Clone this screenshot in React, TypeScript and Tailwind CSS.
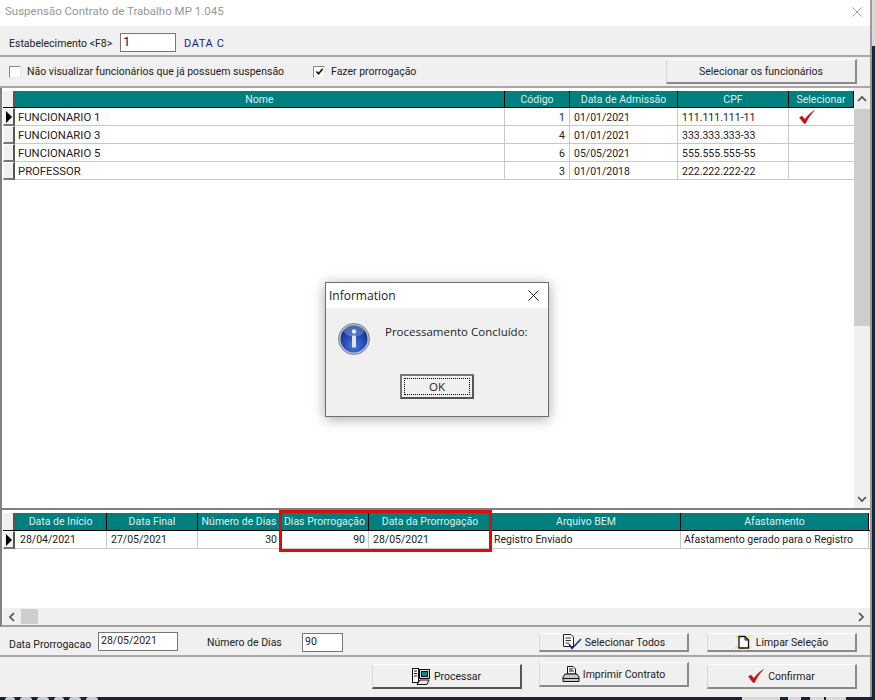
const font = "font-['Roboto',Arial,sans-serif]";

const topColumns = [
  { title: 'Nome', width: 'w-[490px]' },
  { title: 'Código', width: 'w-[65px]' },
  { title: 'Data de Admissão', width: 'w-[108px]' },
  { title: 'CPF', width: 'w-[111px]' },
  { title: 'Selecionar', width: 'w-[65px]' },
];

const employees = [
  { name: 'FUNCIONARIO 1', code: '1', date: '01/01/2021', cpf: '111.111.111-11', selected: true },
  { name: 'FUNCIONARIO 3', code: '4', date: '01/01/2021', cpf: '333.333.333-33', selected: false },
  { name: 'FUNCIONARIO 5', code: '6', date: '05/05/2021', cpf: '555.555.555-55', selected: false },
  { name: 'PROFESSOR', code: '3', date: '01/01/2018', cpf: '222.222.222-22', selected: false },
];

const bottomColumns = [
  { title: 'Data de Início', width: 'w-[92px]', value: '28/04/2021', pad: 'pl-[5px]' },
  { title: 'Data Final', width: 'w-[91px]', value: '27/05/2021', pad: 'pl-[4px]' },
  { title: 'Número de Dias', width: 'w-[83px]', value: '30', pad: 'pr-[3px] text-right' },
  { title: 'Dias Prorrogação', width: 'w-[88px]', value: '90', pad: 'pr-[3px] text-right' },
  { title: 'Data da Prorrogação', width: 'w-[123px]', value: '28/05/2021', pad: 'pl-[4px]' },
  { title: 'Arquivo BEM', width: 'w-[189px]', value: 'Registro Enviado', pad: 'pl-[2px]' },
  { title: 'Afastamento', width: 'w-[188px]', value: 'Afastamento gerado para o Registro', pad: 'pl-[3px]' },
];

function RedCheck({ className }: { className: string }) {
  return (
    <svg viewBox="0 0 16 14" className={className}>
      <path d="M0.5 7.5 L3 6 L6 9.5 C8 6 11 3 15.5 0.5 C12 4 9 8 6.5 13.5 L5 13.5 Z" fill="#d40f14" stroke="#7d0a0c" strokeWidth="0.4" />
    </svg>
  );
}

function Arrow() {
  return (
    <svg viewBox="0 0 8 12" className="h-[12px] w-[8px]">
      <path d="M1 0 L7 6 L1 12 Z" fill="#000" />
    </svg>
  );
}

function Chevron({ d }: { d: string }) {
  return (
    <svg viewBox="0 0 10 10" className="h-[10px] w-[10px]">
      <path d={d} fill="none" stroke="#505050" strokeWidth="1.7" />
    </svg>
  );
}

function Indicator({ current }: { current?: boolean }) {
  return (
    <div className="flex h-[18px] w-[12px] shrink-0 items-center justify-center border-t border-l border-t-white border-l-white border-r-2 border-b-2 border-r-[#555] border-b-[#777] bg-[#f0f0f0]">
      {current && <Arrow />}
    </div>
  );
}

function Check({ checked }: { checked?: boolean }) {
  return (
    <span className="flex h-[12px] w-[12px] shrink-0 items-center justify-center border border-[#8a8a8a] border-r-[#e8e8e8] border-b-[#e8e8e8] bg-white">
      {checked && (
        <svg viewBox="0 0 10 10" className="h-[9px] w-[9px]">
          <path d="M1.5 5 L4 7.5 L8.5 2" fill="none" stroke="#111" strokeWidth="1.8" />
        </svg>
      )}
    </span>
  );
}

function Field({ value, className }: { value: string; className: string }) {
  return (
    <div className={`shrink-0 border border-[#777] bg-white pl-[2px] leading-[15px] ${className}`}>{value}</div>
  );
}

function Btn({ children, className, heavy }: { children: React.ReactNode; className: string; heavy?: boolean }) {
  return (
    <div
      className={`flex shrink-0 items-center justify-center border-t border-l border-t-white border-l-[#d8d8d8] border-r-2 border-b-2 ${heavy ? 'border-r-[#555] border-b-[#555]' : 'border-r-[#8a8a8a] border-b-[#8a8a8a]'} bg-[#f0f0f0] ${className}`}
    >
      {children}
    </div>
  );
}

function InfoIcon() {
  return (
    <svg viewBox="0 0 32 32" className="h-[32px] w-[32px] shrink-0">
      <defs>
        <radialGradient id="info" cx="50%" cy="75%" r="70%">
          <stop offset="0%" stopColor="#4a7ae0" />
          <stop offset="60%" stopColor="#2247b0" />
          <stop offset="100%" stopColor="#16307f" />
        </radialGradient>
      </defs>
      <circle cx="16" cy="16" r="15.5" fill="#b9c0cc" stroke="#7a8496" strokeWidth="1" />
      <circle cx="16" cy="16" r="13.5" fill="url(#info)" />
      <ellipse cx="16" cy="8" rx="10" ry="5.5" fill="#8ea8e6" opacity="0.45" />
      <circle cx="16" cy="8.5" r="2.2" fill="#e8ecf4" />
      <rect x="14" y="12.5" width="4" height="12" rx="0.6" fill="#dfe4ee" />
    </svg>
  );
}

function SelectAllIcon() {
  return (
    <svg viewBox="0 0 20 16" className="h-[16px] w-[20px]">
      <path d="M1.5 0.5 H9 L11.5 3 V12.5 H1.5 Z" fill="#fff" stroke="#222" />
      <path d="M3.5 4 H9 M3.5 6.5 H9 M3.5 9 H7" stroke="#333" />
      <path d="M7 10 L10 14.5 L19 5" fill="none" stroke="#1c2a90" strokeWidth="1.5" />
    </svg>
  );
}

function ClearIcon() {
  return (
    <svg viewBox="0 0 18 18" className="h-[18px] w-[18px]">
      <path d="M1 3 L4 6 M0 16 L3 13 M16 2 L13 5 M16 15 L14 13 M8 17.5 V15.5" stroke="#f2e23a" strokeWidth="1.5" />
      <path d="M4 3.5 H10 L13.5 7 V15 H4 Z" fill="#fff" stroke="#111" strokeWidth="1.3" />
      <path d="M10 3.5 V7 H13.5" fill="none" stroke="#111" />
    </svg>
  );
}

function PrintIcon() {
  return (
    <svg viewBox="0 0 18 16" className="h-[16px] w-[18px]">
      <path d="M5.5 0.5 H11 L13.5 3 V8 H5.5 Z" fill="#fff" stroke="#111" />
      <path d="M7 3 H11 M7 5 H12" stroke="#111" />
      <path d="M3 8 H15 L17 11 V15.5 H1 V11 Z" fill="#c8c8c8" stroke="#111" />
      <path d="M1 12.5 H17" stroke="#111" />
    </svg>
  );
}

function ProcessIcon() {
  return (
    <svg viewBox="0 0 18 17" className="h-[17px] w-[18px]">
      <rect x="0.5" y="0.5" width="6" height="14" fill="#fff" stroke="#111" />
      <path d="M2 3 H5 M2 5.5 H5 M2 8 H5" stroke="#111" />
      <rect x="7.5" y="1.5" width="10" height="9" fill="#d8d8d8" stroke="#111" />
      <rect x="9.5" y="3.5" width="6" height="5" fill="#0f8a8a" stroke="#111" />
      <path d="M5 16.5 L8 12 H17 L15 16.5 Z" fill="#e8e8e8" stroke="#111" />
    </svg>
  );
}

export default function App() {
  return (
    <div className={`relative h-[700px] w-[875px] overflow-hidden bg-[#1b2233] text-[10.5px] text-[#222] ${font}`}>
      <div className="flex h-[697px]">
        <div className="flex h-[697px] w-[870px] shrink-0 flex-col bg-[#f0f0f0]">
          {/* barra de titulo */}
          <div className="flex h-[26px] shrink-0 items-center justify-between bg-white pb-[2px] pl-[5px] pr-[8px]">
            <span className="text-[11.5px] text-[#979797]">Suspensão Contrato de Trabalho MP 1.045</span>
            <svg viewBox="0 0 12 12" className="h-[10px] w-[10px]">
              <path d="M0.5 0.5 L11.5 11.5 M11.5 0.5 L0.5 11.5" stroke="#8c8c8c" strokeWidth="1" />
            </svg>
          </div>

          <div className="flex h-[31px] shrink-0 items-center border-b-2 border-[#a8a8a8] pl-[9px] pt-[4px]">
            <span className="mt-[3px] w-[104px] whitespace-nowrap">Estabelecimento &lt;F8&gt;</span>
            <Field value="1" className="ml-[7px] h-[19px] w-[56px] text-[13px]" />
            <span className="ml-[8px] mt-[3px] text-[11px] tracking-[0.6px] text-[#1c1c78]">DATA C</span>
          </div>

          <div className="flex h-[31px] shrink-0 items-center border-b-2 border-[#a8a8a8] pl-[9px]">
            <Check />
            <span className="ml-[6px] mt-[1px] w-[286px] whitespace-nowrap">Não visualizar funcionários que já possuem suspensão</span>
            <Check checked />
            <span className="ml-[6px] mt-[1px]">Fazer prorrogação</span>
            <Btn className="ml-auto mr-[13px] h-[25px] w-[191px] pt-[2px]">Selecionar os funcionários</Btn>
          </div>

          {/* grade de funcionarios */}
          <div className="flex h-[422px] shrink-0 border-b-2 border-l-2 border-[#808080] bg-white pl-px">
            <div className="min-w-0 flex-1 pt-[3px]">
              <div className="flex h-[17px] border-b border-black">
                <div className="h-[16px] w-[12px] shrink-0 border-r-2 border-r-[#555] bg-[#f0f0f0]" />
                {topColumns.map((c) => (
                  <div key={c.title} className={`${c.width} flex shrink-0 items-center justify-center border-r border-black bg-[#007f7f] pt-[1px] text-[#dcefef]`}>
                    {c.title}
                  </div>
                ))}
              </div>
              {employees.map((e, i) => (
                <div key={e.name} className="flex h-[18px]">
                  <Indicator current={i === 0} />
                  <div className="flex flex-1 border-b border-[#c8c8c8]">
                    <div className="w-[490px] border-r border-[#c8c8c8] pl-[3px] text-[11.3px] leading-[19px]">{e.name}</div>
                    <div className="w-[65px] border-r border-[#c8c8c8] pr-[4px] text-right leading-[19px]">{e.code}</div>
                    <div className="w-[108px] border-r border-[#c8c8c8] pl-[4px] leading-[19px]">{e.date}</div>
                    <div className="w-[111px] border-r border-[#c8c8c8] pl-[4px] leading-[19px]">{e.cpf}</div>
                    <div className="w-[65px] pl-[10px] pt-[2px]">{e.selected && <RedCheck className="h-[14px] w-[16px]" />}</div>
                  </div>
                </div>
              ))}
            </div>
            <div className="flex w-[16px] shrink-0 flex-col bg-[#f0f0f0]">
              <div className="flex h-[18px] shrink-0 items-center justify-center pt-[3px]">
                <Chevron d="M1 7 L5 3 L9 7" />
              </div>
              <div className="mt-[3px] h-[217px] bg-[#cdcdcd]" />
              <div className="mt-auto flex h-[18px] items-center justify-center">
                <Chevron d="M1 3 L5 7 L9 3" />
              </div>
            </div>
          </div>

          {/* grade de periodos */}
          <div className="flex h-[117px] shrink-0 flex-col border-b-2 border-l-2 border-[#a0a0a0] border-l-[#808080] bg-white pl-px">
            <div className="flex-1 pt-[3px]">
              <div className="flex h-[18px] border-b border-black">
                <div className="h-[17px] w-[12px] shrink-0 border-r-2 border-r-[#555] bg-[#f0f0f0]" />
                {bottomColumns.map((c) => (
                  <div key={c.title} className={`${c.width} flex shrink-0 items-center justify-center overflow-hidden whitespace-nowrap border-r border-black bg-[#007f7f] pt-[1px] text-[#dcefef]`}>
                    {c.title}
                  </div>
                ))}
              </div>
              <div className="flex h-[18px]">
                <Indicator current />
                <div className="flex flex-1 border-b border-[#c8c8c8]">
                  {bottomColumns.map((c) => (
                    <div
                      key={c.title}
                      className={`${c.width} ${c.pad} shrink-0 overflow-hidden whitespace-nowrap border-r border-[#c8c8c8] leading-[18px]`}
                    >
                      {c.value}
                    </div>
                  ))}
                </div>
              </div>
            </div>
            <div className="flex h-[17px] shrink-0 items-center bg-[#f0f0f0]">
              <div className="flex w-[18px] justify-center">
                <Chevron d="M7 1 L3 5 L7 9" />
              </div>
              <div className="h-[15px] w-[17px] bg-[#cdcdcd]" />
              <div className="ml-auto flex w-[18px] justify-center">
                <Chevron d="M3 1 L7 5 L3 9" />
              </div>
            </div>
          </div>

          <div className="flex h-[30px] shrink-0 items-start border-b-2 border-[#a8a8a8] pl-[9px] pt-[5px]">
            <span className="mt-[5px] w-[89px] shrink-0 whitespace-nowrap">Data Prorrogacao</span>
            <Field value="28/05/2021" className="h-[19px] w-[80px]" />
            <span className="ml-[29px] mt-[3px] w-[95px] shrink-0 whitespace-nowrap">Número de Dias</span>
            <Field value="90" className="mt-[1px] h-[19px] w-[41px]" />
            <Btn className="ml-[196px] mt-[1px] h-[19px] w-[150px] gap-[3px]">
              <SelectAllIcon />
              <span className="pt-[2px]">Selecionar Todos</span>
            </Btn>
            <Btn className="ml-[18px] mt-[1px] h-[19px] w-[150px] gap-[3px]">
              <ClearIcon />
              <span className="pt-[2px]">Limpar Seleção</span>
            </Btn>
          </div>

          <div className="flex flex-1 items-start pl-[372px]">
            <Btn heavy className="mt-[7px] h-[25px] w-[150px] gap-[4px]">
              <ProcessIcon />
              <span className="pt-[2px]">Processar</span>
            </Btn>
            <Btn className="ml-[17px] mt-[5px] h-[25px] w-[150px] gap-[3px]">
              <PrintIcon />
              <span className="pt-[2px]">Imprimir Contrato</span>
            </Btn>
            <Btn className="ml-[18px] mt-[7px] h-[25px] w-[150px] gap-[4px]">
              <RedCheck className="h-[14px] w-[16px]" />
              <span className="pt-[2px]">Confirmar</span>
            </Btn>
          </div>
        </div>

        {/* borda direita e fundo da tela */}
        <div className="w-[2px] shrink-0 bg-[#9a9a9a]" />
        <div className="h-[46px] w-[3px] shrink-0 bg-[#d9d9d9]" />
      </div>

      {/* restos do desktop na borda de baixo */}
      <div className="flex h-[3px]">
        <div className="ml-[5px] flex w-[105px] gap-[5px]">
          <div className="h-[3px] w-[10px] rounded-t-full bg-[#c8ccd8]" />
          <div className="h-[3px] w-[12px] rounded-t-full bg-[#c8ccd8]" />
          <div className="h-[3px] w-[12px] rounded-t-full bg-[#c8ccd8]" />
          <div className="h-[3px] w-[10px] rounded-t-full bg-[#c8ccd8]" />
          <div className="h-[3px] w-[12px] rounded-t-full bg-[#c8ccd8]" />
          <div className="h-[3px] w-[12px] rounded-t-full bg-[#c8ccd8]" />
        </div>
        <div className="ml-[632px] h-[3px] w-[38px] bg-[#d8d8d8]" />
        <div className="ml-[8px] h-[3px] w-[13px] bg-[#d8d8d8]" />
        <div className="ml-[9px] h-[3px] w-[14px] bg-[#d8d8d8]" />
        <div className="ml-[2px] h-[3px] w-[20px] bg-[#d8d8d8]" />
      </div>

      {/* marca vermelha */}
      <div className="absolute left-[279px] top-[510px] h-[42px] w-[213px] border-[3px] border-[#e00c0c]" />

      {/* dialogo */}
      <div className="absolute left-[325px] top-[282px] flex h-[135px] w-[224px] flex-col border border-[#6e6e6e] bg-[#f0f0f0] text-[11.5px] shadow-[0_2px_12px_rgba(0,0,0,0.35)] font-['Open_Sans',sans-serif]">
        <div className="flex h-[25px] shrink-0 items-center justify-between bg-white pl-[3px] pr-[9px] text-[12px]">
          <span>Information</span>
          <svg viewBox="0 0 12 12" className="h-[11px] w-[11px]">
            <path d="M0.5 0.5 L11.5 11.5 M11.5 0.5 L0.5 11.5" stroke="#111" strokeWidth="1" />
          </svg>
        </div>
        <div className="flex pl-[12px] pt-[15px]">
          <InfoIcon />
          <span className="ml-[15px]">Processamento Concluído:</span>
        </div>
        <div className="mt-[19px] flex justify-center">
          <div className="flex h-[25px] w-[74px] items-center justify-center border-2 border-[#555] border-t-[#777] border-l-[#777] p-[2px]">
            <div className="flex h-full w-full items-center justify-center border border-dotted border-black">OK</div>
          </div>
        </div>
      </div>
    </div>
  );
}
